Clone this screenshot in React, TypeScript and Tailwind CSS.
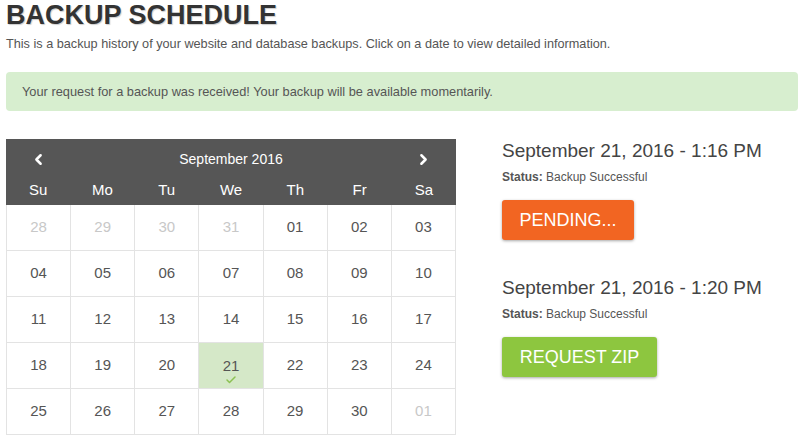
import React from "react";
import { ChevronLeft, ChevronRight, Check } from "lucide-react";

const weeks: { d: string; muted?: boolean; sel?: boolean }[][] = [
  [{ d: "28", muted: true }, { d: "29", muted: true }, { d: "30", muted: true }, { d: "31", muted: true }, { d: "01" }, { d: "02" }, { d: "03" }],
  [{ d: "04" }, { d: "05" }, { d: "06" }, { d: "07" }, { d: "08" }, { d: "09" }, { d: "10" }],
  [{ d: "11" }, { d: "12" }, { d: "13" }, { d: "14" }, { d: "15" }, { d: "16" }, { d: "17" }],
  [{ d: "18" }, { d: "19" }, { d: "20" }, { d: "21", sel: true }, { d: "22" }, { d: "23" }, { d: "24" }],
  [{ d: "25" }, { d: "26" }, { d: "27" }, { d: "28" }, { d: "29" }, { d: "30" }, { d: "01", muted: true }],
];

const days = ["Su", "Mo", "Tu", "We", "Th", "Fr", "Sa"];

function Entry({ time, btn, color, w }: { time: string; btn: string; color: string; w: string }) {
  return (
    <div className="flex flex-col items-start">
      <div className="text-[19px] leading-[24px] text-[#444]">{time}</div>
      <div className="mt-[6px] text-[12px] leading-[16px] text-[#555]">
        <span className="font-bold">Status:</span> Backup Successful
      </div>
      <button
        className={`mt-[15px] h-[40px] ${w} ${color} rounded-[3px] text-white text-[18px] uppercase shadow-[0_1px_3px_rgba(0,0,0,0.35)] flex items-center justify-center`}
      >
        {btn}
      </button>
    </div>
  );
}

export default function App() {
  return (
    <div className="w-[800px] h-[445px] overflow-hidden bg-white px-[6px] font-['Liberation_Sans',Arial,sans-serif]">
      <h1 className="text-[27px] leading-[30px] font-bold text-[#333] [text-shadow:1px_1px_1px_rgba(0,0,0,0.2)]">
        BACKUP SCHEDULE
      </h1>
      <p className="mt-[5px] text-[12.7px] leading-[18px] text-[#555]">
        This is a backup history of your website and database backups. Click on a date to view detailed information.
      </p>
      <div className="mt-[19px] w-[792px] h-[39px] rounded-[4px] bg-[#d7eecf] flex items-center pl-[16px] text-[12.8px] text-[#555]">
        Your request for a backup was received! Your backup will be available momentarily.
      </div>

      <div className="mt-[28px] flex gap-[46px]">
        <div className="w-[450px]">
          <div className="bg-[#565656] text-white">
            <div className="h-[36px] pt-[4px] flex items-center justify-between px-[24px]">
              <ChevronLeft size={17} strokeWidth={3.5} />
              <span className="text-[14px]">September 2016</span>
              <ChevronRight size={17} strokeWidth={3.5} />
            </div>
            <div className="grid grid-cols-7 h-[30px] items-center text-center text-[15px]">
              {days.map((d) => (
                <div key={d}>{d}</div>
              ))}
            </div>
          </div>
          <div className="border-l border-[#e3e3e3]">
            {weeks.map((w, i) => (
              <div key={i} className="grid grid-cols-7">
                {w.map((c, j) => (
                  <div
                    key={j}
                    className={`h-[46px] border-r border-b border-[#e3e3e3] flex flex-col items-center justify-center text-[15px] ${
                      c.muted ? "text-[#c8c8c8]" : "text-[#555]"
                    } ${c.sel ? "bg-[#d5e8c8]" : ""}`}
                  >
                    <span className={c.sel ? "leading-[16px] mt-[12px]" : ""}>{c.d}</span>
                    {c.sel && <Check size={12} strokeWidth={3} className="text-[#8cc152]" />}
                  </div>
                ))}
              </div>
            ))}
          </div>
        </div>

        <div className="flex flex-col gap-[36px]">
          <Entry time="September 21, 2016 - 1:16 PM" btn="Pending..." color="bg-[#f26522]" w="w-[132px]" />
          <Entry time="September 21, 2016 - 1:20 PM" btn="Request ZIP" color="bg-[#8dc63f]" w="w-[155px]" />
        </div>
      </div>
    </div>
  );
}
